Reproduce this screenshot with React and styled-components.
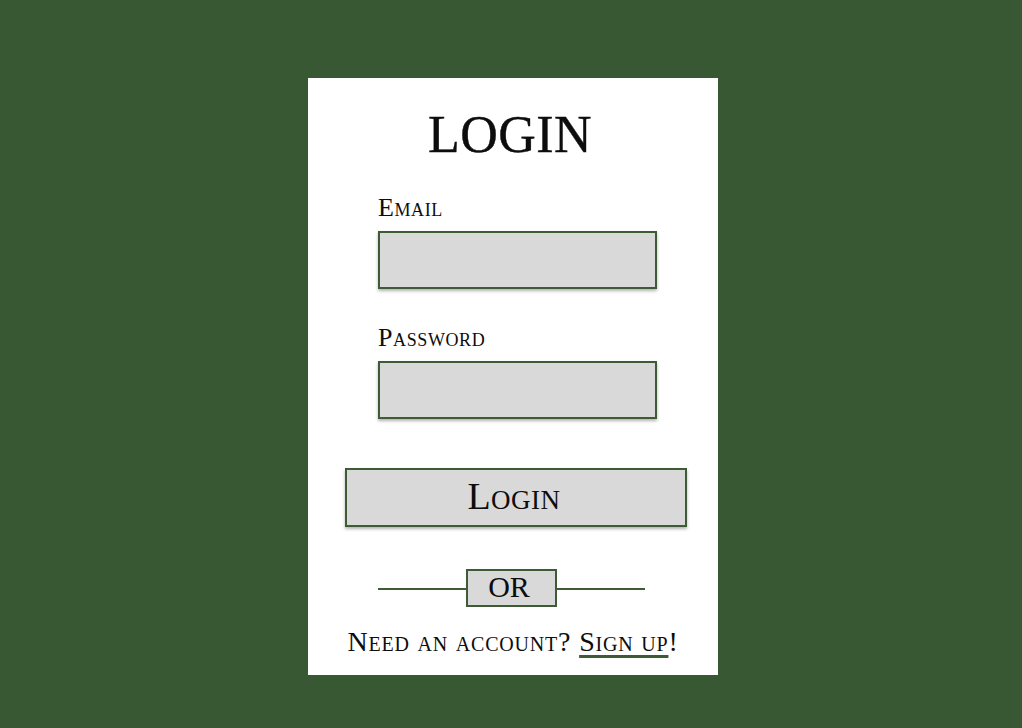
import React from "react";
import styled, { createGlobalStyle } from "styled-components";

const GREEN = "#385733";
const BORDER = "#3d5c35";

const Global = createGlobalStyle`
  html, body { margin: 0; padding: 0; }
  body {
    background: ${GREEN};
    font-family: "Liberation Serif", "Times New Roman", serif;
    color: #0d0d0d;
  }
`;

const Page = styled.div`
  min-height: 728px;
  display: flex;
  justify-content: center;
  align-items: flex-start;
  padding: 78px 0 0 4px;
  box-sizing: border-box;
`;

const Card = styled.form`
  width: 410px;
  height: 597px;
  background: #ffffff;
  box-sizing: border-box;
  padding-top: 30px;
  display: flex;
  flex-direction: column;
  align-items: center;
`;

const Title = styled.h1`
  margin: 0;
  font-size: 52px;
  line-height: 54px;
  font-weight: normal;
  letter-spacing: 0.5px;
  padding-right: 6px;
  -webkit-text-stroke: 0.4px #0d0d0d;
`;

const Field = styled.div`
  display: flex;
  flex-direction: column;
  gap: 10px;
  width: 279px;
  margin-top: ${(p) => p.$top}px;
  margin-left: 9px;
`;

const Label = styled.label`
  font-size: 26px;
  line-height: 26px;
  font-variant: small-caps;
  letter-spacing: 0.6px;
`;

const Input = styled.input`
  box-sizing: border-box;
  width: 279px;
  height: 58px;
  border: 2px solid ${BORDER};
  background: #d9d9d9;
  box-shadow: 0 2px 3px rgba(0, 0, 0, 0.3);
  outline: none;
  padding: 0 10px;
  font-family: inherit;
  font-size: 20px;
`;

const Button = styled.button`
  box-sizing: border-box;
  width: 342px;
  height: 59px;
  margin-top: 49px;
  margin-left: 6px;
  border: 2px solid ${BORDER};
  background: #d9d9d9;
  box-shadow: 0 2px 3px rgba(0, 0, 0, 0.3);
  font-family: inherit;
  font-size: 38px;
  line-height: 1;
  font-variant: small-caps;
  letter-spacing: 0.5px;
  color: #0d0d0d;
  padding: 0 4px 4px 0;
  cursor: pointer;
`;

const Divider = styled.div`
  display: flex;
  align-items: center;
  width: 267px;
  margin-top: 42px;
  margin-left: -4px;
`;

const Line = styled.span`
  flex: 1;
  height: 2px;
  margin-top: 2px;
  background: ${BORDER};
`;

const OrBox = styled.span`
  box-sizing: border-box;
  width: 91px;
  height: 38px;
  border: 2px solid ${BORDER};
  background: #d9d9d9;
  display: flex;
  align-items: center;
  justify-content: center;
  font-size: 30px;
  line-height: 1;
  padding: 0 4px 2px 0;
`;

const Footer = styled.p`
  margin: 21px 0 0 0;
  font-size: 28px;
  line-height: 28px;
  font-variant: small-caps;
  letter-spacing: 0.8px;
  padding-left: 0;
`;

const SignUp = styled.a`
  color: inherit;
  text-decoration: underline;
  text-decoration-color: ${BORDER};
  text-decoration-thickness: 3px;
  text-underline-offset: 4px;
  cursor: pointer;
`;

export default function App() {
  return (
    <>
      <Global />
      <Page>
        <Card onSubmit={(e) => e.preventDefault()}>
          <Title>LOGIN</Title>
          <Field $top={33}>
            <Label htmlFor="email">Email</Label>
            <Input id="email" type="email" />
          </Field>
          <Field $top={36}>
            <Label htmlFor="password">Password</Label>
            <Input id="password" type="password" />
          </Field>
          <Button type="submit">Login</Button>
          <Divider>
            <Line />
            <OrBox>OR</OrBox>
            <Line />
          </Divider>
          <Footer>
            Need an account? <SignUp>Sign up</SignUp>!
          </Footer>
        </Card>
      </Page>
    </>
  );
}
